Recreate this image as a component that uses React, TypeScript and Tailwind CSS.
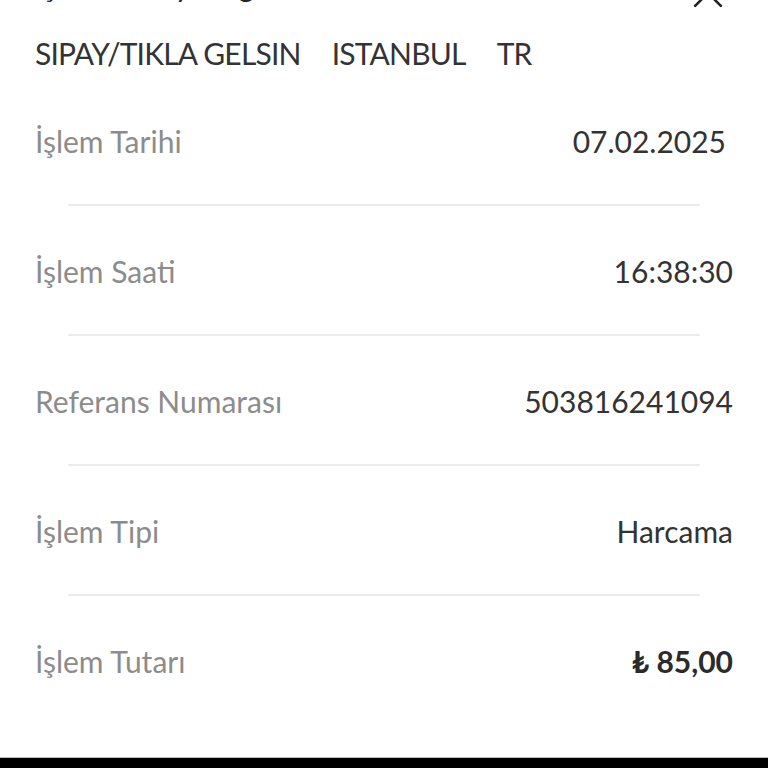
import React from 'react';

const rows = [
  { label: 'İşlem Tarihi', value: '07.02.2025', valueClass: 'mr-[7px]' },
  { label: 'İşlem Saati', value: '16:38:30' },
  { label: 'Referans Numarası', value: '503816241094' },
  { label: 'İşlem Tipi', value: 'Harcama' },
  { label: 'İşlem Tutarı', value: '₺ 85,00', bold: true },
];

export default function App() {
  return (
    <div className="w-[768px] h-[768px] overflow-hidden bg-white flex flex-col font-['Lato',sans-serif]">
      {/* cropped header */}
      <div className="flex items-center justify-between pl-[35px] pr-[38px] mt-[-35px] h-[40px] shrink-0">
        <span className="text-[30px] text-[#222] leading-none">İşlem Detayı Bilgileri</span>
        <svg className="self-end mb-[-10px]" width="44" height="44" viewBox="0 0 24 24" fill="none" stroke="#222" strokeWidth="1.4" strokeLinecap="round">
          <path d="M5 5l14 14M19 5L5 19" />
        </svg>
      </div>

      <div className="flex flex-col flex-1 px-[35px]">
        <div className="flex items-center gap-[31px] h-[50px] mt-[23px] text-[30px] text-[#333] tracking-[-0.8px]">
          <span>SIPAY/TIKLA GELSIN</span>
          <span>ISTANBUL</span>
          <span>TR</span>
        </div>

        <div className="mt-[33px] flex flex-col">
          {rows.map((r, i) => (
            <React.Fragment key={r.label}>
              <div className="flex items-center justify-between h-[60px]">
                <span className="text-[30px] text-[#8c8c8c]">{r.label}</span>
                <span className={`text-[30px] ${r.bold ? 'font-bold text-[#2b2b2b]' : 'text-[#333]'} ${r.valueClass ?? ''}`}>{r.value}</span>
              </div>
              {i < rows.length - 1 && (
                <div className="mx-[33px] mt-[33px] mb-[35px] h-[2px] bg-[#ebebeb] rounded-full" />
              )}
            </React.Fragment>
          ))}
        </div>
      </div>

      <div className="h-[11px] shrink-0 border-t border-[#bdbdbd] bg-black" />
    </div>
  );
}
